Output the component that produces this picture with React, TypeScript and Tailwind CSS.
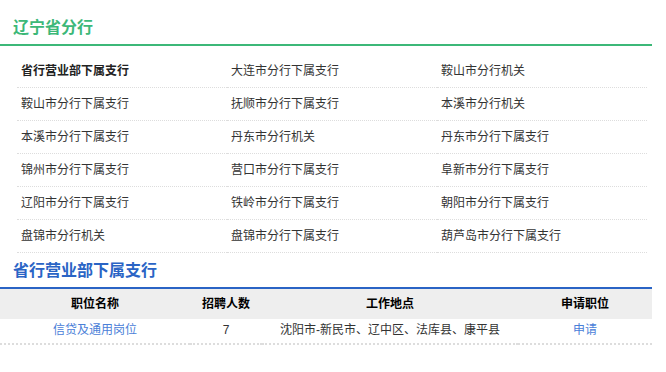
import React from "react";

const rows: string[][] = [
  ["省行营业部下属支行", "大连市分行下属支行", "鞍山市分行机关"],
  ["鞍山市分行下属支行", "抚顺市分行下属支行", "本溪市分行机关"],
  ["本溪市分行下属支行", "丹东市分行机关", "丹东市分行下属支行"],
  ["锦州市分行下属支行", "营口市分行下属支行", "阜新市分行下属支行"],
  ["辽阳市分行下属支行", "铁岭市分行下属支行", "朝阳市分行下属支行"],
  ["盘锦市分行机关", "盘锦市分行下属支行", "葫芦岛市分行下属支行"],
];

export default function App() {
  return (
    <div
      className="w-[666px] h-[372px] bg-white text-[#333]"
      style={{ fontFamily: '"Liberation Sans", "Noto Sans CJK SC", sans-serif' }}
    >
      <div className="w-[652px]">
        <div className="pt-4 pb-1 pl-[13px] leading-6 text-[16px] font-bold text-[#3cb878] border-b-2 border-[#3cb878]">
          辽宁省分行
        </div>
        <div className="mt-[9px] ml-[17px] w-[630px] grid grid-cols-3">
          {rows.flat().map((t, i) => (
            <div
              key={i}
              className={`h-[33px] flex items-center pl-1 text-[12px] border-b border-dotted border-[#dddddd] ${
                i === 0 ? "font-bold text-[#222]" : "text-[#333]"
              }`}
            >
              {t}
            </div>
          ))}
        </div>
        <div className="pt-[6px] pb-1 pl-[13px] leading-6 text-[16px] font-bold text-[#2a64c5] border-b-2 border-[#2a64c5]">
          省行营业部下属支行
        </div>
        <div className="grid grid-cols-[190px_72px_256px_134px] text-[12px]">
          <div className="h-[30px] bg-[#eeeeee] flex items-center justify-center font-bold text-black">职位名称</div>
          <div className="h-[30px] bg-[#eeeeee] flex items-center justify-center font-bold text-black">招聘人数</div>
          <div className="h-[30px] bg-[#eeeeee] flex items-center justify-center font-bold text-black">工作地点</div>
          <div className="h-[30px] bg-[#eeeeee] flex items-center justify-center font-bold text-black">申请职位</div>
          <div className="h-[26px] pb-[2px] flex items-center justify-center text-[#4a80d8] border-b-2 border-dotted border-[#dddddd]">信贷及通用岗位</div>
          <div className="h-[26px] pb-[2px] flex items-center justify-center text-[#333] border-b-2 border-dotted border-[#dddddd]">7</div>
          <div className="h-[26px] pb-[2px] flex items-center justify-center text-[#333] border-b-2 border-dotted border-[#dddddd]">沈阳市-新民市、辽中区、法库县、康平县</div>
          <div className="h-[26px] pb-[2px] flex items-center justify-center text-[#4a80d8] border-b-2 border-dotted border-[#dddddd]">申请</div>
        </div>
      </div>
    </div>
  );
}
